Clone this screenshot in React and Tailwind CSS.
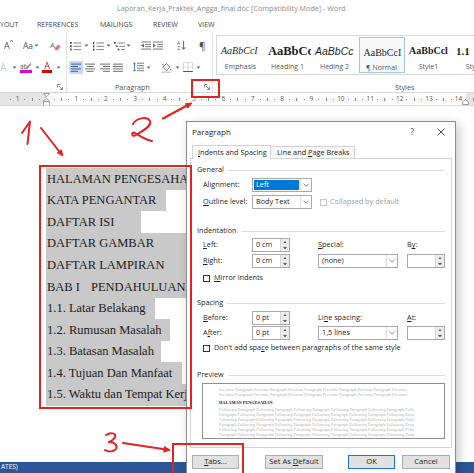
import React from "react";

const SERIF = "font-['Liberation_Serif','Times_New_Roman',serif]";
const RED = "#e32322";

function Caret() {
  return (
    <svg width="5" height="3" viewBox="0 0 5 3" className="shrink-0">
      <path d="M0.5 0.4h4L2.5 2.7z" fill="#6b6b6b" />
    </svg>
  );
}

function Launcher() {
  return (
    <svg width="6" height="6" viewBox="0 0 6 6">
      <path d="M0.5 3.5v-3h3" stroke="#7a7a7a" strokeWidth="0.9" fill="none" />
      <path d="M2 2l3.3 3.3M5.5 3v2.5H3" stroke="#7a7a7a" strokeWidth="0.9" fill="none" />
    </svg>
  );
}

function LinesIcon({ rows, color = "#6e6e6e" }) {
  return (
    <svg width="10" height="9" viewBox="0 0 10 9">
      {rows.map(([x, len], i) => (
        <rect key={i} x={x} y={0.6 + i * 2.4} width={len} height="1" fill={color} />
      ))}
    </svg>
  );
}

function ListIcon({ kind }) {
  return (
    <svg width="11" height="10" viewBox="0 0 11 10">
      {[0, 1, 2].map((i) => {
        const y = 1 + i * 3.3;
        const ind = kind === "multi" ? i * 1.8 : 0;
        return (
          <g key={i}>
            <rect x={ind} y={y} width={kind === "numbers" ? 1.4 : 1.8} height={kind === "numbers" ? 2.2 : 1.8} fill="#555" />
            <rect x={ind + 3.4} y={y + 0.5} width={11 - ind - 3.4} height="1" fill="#858585" />
          </g>
        );
      })}
    </svg>
  );
}

function IndentIcon({ dir }) {
  return (
    <svg width="10" height="9" viewBox="0 0 10 9">
      <rect x="0" y="0.5" width="10" height="1" fill="#7a7a7a" />
      <rect x="4.2" y="2.9" width="5.8" height="1" fill="#7a7a7a" />
      <rect x="4.2" y="5.2" width="5.8" height="1" fill="#7a7a7a" />
      <rect x="0" y="7.6" width="10" height="1" fill="#7a7a7a" />
      {dir === "in" ? (
        <path d="M0 2.4L3 4.5L0 6.6z" fill="#3a6fb6" />
      ) : (
        <path d="M3 2.4L0 4.5L3 6.6z" fill="#3a6fb6" />
      )}
    </svg>
  );
}

function SortIcon() {
  return (
    <svg width="9" height="11" viewBox="0 0 9 11">
      <text x="0" y="4.6" fontSize="5" fontFamily="Open Sans" fill="#555">A</text>
      <text x="0.2" y="10.4" fontSize="5" fontFamily="Open Sans" fill="#555">Z</text>
      <path d="M6.6 0.8v8.4M4.9 7.3l1.7 2 1.7-2" stroke="#555" strokeWidth="0.9" fill="none" />
    </svg>
  );
}

function LineSpacingIcon() {
  return (
    <svg width="11" height="10" viewBox="0 0 11 10">
      <rect x="4" y="0.7" width="7" height="1" fill="#7a7a7a" />
      <rect x="4" y="3.2" width="7" height="1" fill="#7a7a7a" />
      <rect x="4" y="5.7" width="7" height="1" fill="#7a7a7a" />
      <rect x="4" y="8.2" width="7" height="1" fill="#7a7a7a" />
      <path d="M1.5 0.2L0 2.3h3zM1.5 9.8L0 7.7h3z" fill="#3a6fb6" />
      <rect x="1.1" y="2" width="0.8" height="6" fill="#3a6fb6" />
    </svg>
  );
}

function ShadingIcon() {
  return (
    <svg width="11" height="11" viewBox="0 0 11 11">
      <path d="M1.8 5.2L5.4 1.6L9 5.2L5.4 8.8Z" fill="#f3f3f3" stroke="#6a6a6a" strokeWidth="0.9" />
      <path d="M3.2 3.8L1.2 1.8" stroke="#6a6a6a" strokeWidth="0.9" />
      <path d="M9.4 6.4c0.8 1.1 1 1.9 0.3 2.1-0.7 0.2-0.9-0.7-0.3-2.1z" fill="#6a6a6a" />
      <rect x="0.5" y="9.6" width="9" height="1.2" fill="#bdbdbd" />
    </svg>
  );
}

function BordersIcon() {
  return (
    <svg width="10" height="10" viewBox="0 0 10 10">
      <rect x="0.5" y="0.5" width="9" height="9" fill="none" stroke="#a8a8a8" strokeWidth="0.8" strokeDasharray="1 1" />
      <path d="M5 0.5v9M0.5 5h9" stroke="#a8a8a8" strokeWidth="0.8" strokeDasharray="1 1" />
      <path d="M0.3 9.5h9.4" stroke="#555" strokeWidth="1" />
    </svg>
  );
}

function EraserIcon() {
  return (
    <svg width="11" height="11" viewBox="0 0 11 11">
      <text x="0" y="8" fontSize="8" fontFamily="Open Sans" fill="#6a6a6a">A</text>
      <path d="M4.2 9.2L8 4.6L10.6 6.6L7.2 10.6Z" fill="#e46aa3" />
    </svg>
  );
}

function FontGroup() {
  return (
    <div className="w-[67px] shrink-0 flex flex-col border-r border-[#e3e3e3] pt-[7px]">
      <div className="h-[14px] flex items-center">
        <div className="ml-[4px] w-[9px] flex items-start">
          <span className="text-[9px] leading-none text-[#555]">A</span>
          <svg width="3" height="2" viewBox="0 0 3 2" className="mt-[-1px]">
            <path d="M0 2L1.5 0L3 2" stroke="#555" strokeWidth="0.7" fill="none" />
          </svg>
        </div>
        <div className="ml-[10px] w-[17px] flex items-center gap-[1px]">
          <span className="text-[8.5px] leading-none text-[#555]">Aa</span>
          <Caret />
        </div>
        <div className="ml-[10px]">
          <EraserIcon />
        </div>
      </div>
      <div className="mt-[8px] h-[14px] flex items-center">
        <span className="w-[9px] text-[10px] leading-none text-[#c9d2de]">A</span>
        <div className="ml-[3px]"><Caret /></div>
        <div className="ml-[3px] w-[12px] flex flex-col items-center">
          <svg width="12" height="8" viewBox="0 0 12 8">
            <text x="0" y="7" fontSize="6.5" fontFamily="Open Sans" fill="#555">ab</text>
            <path d="M6 6L10.5 1L11.6 2L7.2 7z" fill="#8a8a8a" />
          </svg>
          <div className="w-[12px] h-[2.5px] bg-[#e000d8]" />
        </div>
        <div className="ml-[3px]"><Caret /></div>
        <div className="ml-[2px] w-[10px] flex flex-col items-center">
          <span className="text-[9px] leading-[8px] text-[#a42020]">A</span>
          <div className="w-[10px] h-[2.5px] bg-[#d00000]" />
        </div>
        <div className="ml-[4px]"><Caret /></div>
      </div>
      <div className="mt-[8px] h-[10px] flex items-center justify-end pr-[3px]">
        <Launcher />
      </div>
    </div>
  );
}

function ParagraphGroup() {
  const left = [[0, 10], [0, 7], [0, 10], [0, 7]];
  const center = [[0, 10], [1.5, 7], [0, 10], [1.5, 7]];
  const right = [[0, 10], [3, 7], [0, 10], [3, 7]];
  const justify = [[0, 10], [0, 10], [0, 10], [0, 10]];
  return (
    <div className="w-[146px] shrink-0 flex flex-col border-r border-[#e3e3e3] pt-[7px]">
      <div className="h-[14px] flex items-center">
        <div className="ml-[3px]"><ListIcon kind="bullets" /></div>
        <div className="ml-[3px]"><Caret /></div>
        <div className="ml-[4px]"><ListIcon kind="numbers" /></div>
        <div className="ml-[2px]"><Caret /></div>
        <div className="ml-[3px]"><ListIcon kind="multi" /></div>
        <div className="ml-[1px]"><Caret /></div>
        <div className="ml-[10px]"><IndentIcon dir="out" /></div>
        <div className="ml-[2px]"><IndentIcon dir="in" /></div>
        <div className="ml-[14px]"><SortIcon /></div>
        <div className="ml-[13px] w-[8px] text-[10px] leading-none text-[#555]">¶</div>
      </div>
      <div className="mt-[8px] h-[14px] flex items-center">
        <div className="ml-[2px] w-[14px] h-[13px] bg-[#c7d8ef] flex items-center justify-center">
          <LinesIcon rows={left} color="#3564a6" />
        </div>
        <div className="ml-[2px]"><LinesIcon rows={center} /></div>
        <div className="ml-[5px]"><LinesIcon rows={right} /></div>
        <div className="ml-[3px]"><LinesIcon rows={justify} /></div>
        <div className="ml-[10px]"><LineSpacingIcon /></div>
        <div className="ml-[2px]"><Caret /></div>
        <div className="ml-[10px]"><ShadingIcon /></div>
        <div className="ml-[3px]"><Caret /></div>
        <div className="ml-[3px]"><BordersIcon /></div>
        <div className="ml-[3px]"><Caret /></div>
      </div>
      <div className="mt-[8px] h-[10px] flex items-center">
        <span className="ml-[48px] text-[7.2px] leading-none text-[#555]">Paragraph</span>
        <div className="ml-auto mr-[2px]"><Launcher /></div>
      </div>
    </div>
  );
}

const galleryItems = [
  { prev: "AaBbCcI", cls: "italic text-[10px] " + SERIF, label: "Emphasis" },
  { prev: "AaBbCc", cls: "font-bold text-[12.5px] " + SERIF, label: "Heading 1" },
  { prev: "AaBbCc", cls: "italic text-[10.5px] font-['Liberation_Sans',sans-serif]", label: "Heding 2" },
  { prev: "AaBbCcI", cls: "text-[10px] " + SERIF, label: "¶ Normal", sel: true },
  { prev: "AaBbCcl", cls: "font-bold text-[10px] " + SERIF, label: "Style1" },
  { prev: "1.1", cls: "font-bold text-[11px] " + SERIF, label: "Style2" },
];

function StylesGroup() {
  return (
    <div className="flex-1 min-w-0 flex flex-col pt-[3px] overflow-hidden">
      <div className="ml-[3px] h-[40px] flex border border-r-0 border-[#d8d8d8] pl-[0px]">
        {galleryItems.map((s) => (
          <div
            key={s.label}
            className={
              s.sel
                ? "w-[46px] mx-[0.5px] my-[1px] shrink-0 flex flex-col border border-[#a9c4e6] bg-[#f7fafd] overflow-hidden"
                : "w-[47px] shrink-0 flex flex-col overflow-hidden"
            }
          >
            <div className="mt-[8px] h-[14px] pl-[4px] flex items-center whitespace-nowrap text-[#1e1e1e] leading-none">
              <span className={s.cls}>{s.prev}</span>
            </div>
            <div className="mt-[3px] h-[10px] flex items-center justify-center whitespace-nowrap text-[7px] leading-none text-[#555]">
              {s.label}
            </div>
          </div>
        ))}
      </div>
      <div className="mt-[8px] h-[10px] flex items-center pl-[182px] text-[7.2px] leading-none text-[#555]">
        Styles
      </div>
    </div>
  );
}

function Dot() {
  return <span className="w-[1px] h-[1px] bg-[#8a8a8a]" />;
}
function Tick() {
  return <span className="w-[1px] h-[3px] bg-[#8a8a8a]" />;
}

function Hourglass() {
  return (
    <svg width="7" height="13" viewBox="0 0 7 13" className="shrink-0">
      <path d="M0.5 0.5h6L3.5 4z" fill="#fff" stroke="#8a8a8a" strokeWidth="0.8" />
      <path d="M3.5 5L6.5 8.3h-6z" fill="#fff" stroke="#8a8a8a" strokeWidth="0.8" />
      <rect x="0.5" y="8.8" width="6" height="3.6" fill="#fff" stroke="#8a8a8a" strokeWidth="0.8" />
    </svg>
  );
}

function Ruler() {
  const marks = ["1", null, "1", "2", "3", "4", "5", "6", "7", "8", "9", "10", "11", "12", "13", "14"];
  return (
    <div className="h-[13px] shrink-0 flex items-center border-b border-[#d9d9d9] bg-[linear-gradient(to_right,#e4e4e4_47px,#ffffff_47px,#ffffff_466px,#e4e4e4_466px)] text-[6.5px] leading-none text-[#555] overflow-hidden">
      <div className="w-[13.9px] shrink-0 flex justify-end">
        <span className="w-[7.35px] flex justify-center"><Dot /></span>
      </div>
      {marks.map((m, i) => (
        <div key={i} className="w-[29.4px] shrink-0 flex items-center">
          <span className="w-[7.35px] flex justify-center">{m === null ? <Hourglass /> : m}</span>
          <span className="w-[7.35px] flex justify-center">
            {i === marks.length - 1 ? (
              <svg width="7" height="6" viewBox="0 0 7 6" className="mt-[6px]">
                <path d="M0.5 5.5v-2.5L3.5 0.5L6.5 3v2.5z" fill="#fff" stroke="#8a8a8a" strokeWidth="0.8" />
              </svg>
            ) : (
              <Dot />
            )}
          </span>
          <span className="w-[7.35px] flex justify-center"><Tick /></span>
          <span className="w-[7.35px] flex justify-center"><Dot /></span>
        </div>
      ))}
    </div>
  );
}

const docLines = [
  { t: "HALAMAN PENGESAHAN", w: "w-[200px]" },
  { t: "KATA PENGANTAR", w: "w-[120px]" },
  { t: "DAFTAR ISI", w: "w-[95px]" },
  { t: "DAFTAR GAMBAR", w: "w-[200px]" },
  { t: "DAFTAR LAMPIRAN", w: "w-[200px]" },
  { t: "BAB", w: "w-[200px]", bab: true },
  { t: "1.1. Latar Belakang", w: "w-[109px]" },
  { t: "1.2. Rumusan Masalah", w: "w-[124px]" },
  { t: "1.3. Batasan Masalah", w: "w-[115px]" },
  { t: "1.4. Tujuan Dan Manfaat", w: "w-[136px]" },
  { t: "1.5. Waktu dan Tempat Kerja Praktek", w: "w-[200px]" },
];

function Document() {
  return (
    <div className={"flex-1 pt-[62px] pl-[46px] text-[12.5px] leading-none text-[#1c1c1c] " + SERIF}>
      {docLines.map((l, i) => (
        <div key={i} className={"h-[21.6px] flex items-center bg-[#c9c9c9] whitespace-nowrap overflow-hidden pl-[1px] " + l.w}>
          {l.bab ? (
            <>
              <span className="w-[44px] shrink-0">BAB I</span>
              <span>PENDAHULUAN</span>
            </>
          ) : (
            l.t
          )}
        </div>
      ))}
    </div>
  );
}

function Spin({ value }) {
  return (
    <div className="flex h-[14px] w-[38px] border border-[#a9a9a9] bg-white">
      <div className="flex-1 flex items-center pl-[3px]">{value}</div>
      <div className="w-[9px] flex flex-col bg-[#ededed] border-l border-[#d6d6d6]">
        <div className="flex-1 flex items-center justify-center">
          <svg width="4" height="2.5" viewBox="0 0 4 2.5"><path d="M0 2.5L2 0L4 2.5z" fill="#555" /></svg>
        </div>
        <div className="flex-1 flex items-center justify-center">
          <svg width="4" height="2.5" viewBox="0 0 4 2.5"><path d="M0 0L2 2.5L4 0z" fill="#555" /></svg>
        </div>
      </div>
    </div>
  );
}

function Combo({ children, w, selected }) {
  return (
    <div className={"flex h-[14px] border border-[#a9a9a9] bg-white " + w}>
      <div className="flex-1 flex items-center p-[1px]">
        {selected ? (
          <div className="h-full w-full bg-[#0078d7] text-white flex items-center pl-[2px]">{children}</div>
        ) : (
          <div className="pl-[2px] flex items-center">{children}</div>
        )}
      </div>
      <div className="w-[11px] flex items-center justify-center border-l border-[#e0e0e0]">
        <svg width="6" height="4" viewBox="0 0 6 4">
          <path d="M0.5 0.7L3 3.2L5.5 0.7" stroke="#666" strokeWidth="0.8" fill="none" />
        </svg>
      </div>
    </div>
  );
}

function Check({ disabled }) {
  return (
    <div className={disabled ? "w-[7px] h-[7px] border border-[#c4c4c4] bg-white" : "w-[7px] h-[7px] border border-[#333] bg-white"} />
  );
}

function Section({ label }) {
  return (
    <div className="h-[12px] flex items-center gap-[4px]">
      <span>{label}</span>
      <div className="flex-1 h-px bg-[#dcdcdc]" />
    </div>
  );
}

const prevLine = "Previous Paragraph Previous Paragraph Previous Paragraph Previous Paragraph Previous Paragraph Previous";
const follA = "Following Paragraph Following Paragraph Following Paragraph Following Paragraph Following Paragraph Following";
const follB = "Paragraph Following Paragraph Following Paragraph Following Paragraph Following Paragraph Following Paragraph";

function Dialog() {
  return (
    <div className="absolute left-[186px] top-[121px] w-[270px] h-[360px] bg-white border border-[#8e8e8e] shadow-[3px_3px_10px_rgba(0,0,0,0.22)] flex flex-col text-[7.3px] leading-none text-[#1f1f1f]">
      <div className="h-[20px] flex items-center pl-[5px] pr-[10px]">
        <span className="text-[8px]">Paragraph</span>
        <span className="ml-auto text-[8.5px] text-[#444]">?</span>
        <svg className="ml-[23px]" width="8" height="8" viewBox="0 0 8 8">
          <path d="M0.5 0.5l7 7M7.5 0.5l-7 7" stroke="#333" strokeWidth="0.9" />
        </svg>
      </div>
      <div className="mt-[3px] h-[13px] flex items-end pl-[5px]">
        <div className="relative z-10 -mb-px w-[79px] h-[14px] border border-b-0 border-[#d3d3d3] bg-white flex items-center pl-[5px] whitespace-nowrap">
          <u>I</u>ndents and Spacing
        </div>
        <div className="w-[84px] h-[12px] border-t border-r border-[#d3d3d3] bg-[#f8f8f8] flex items-center pl-[6px] whitespace-nowrap">
          Line and&nbsp;<u>P</u>age Breaks
        </div>
      </div>
      <div className="mx-[3px] h-[290px] border border-[#d3d3d3] bg-white pl-[6px] pr-[6px] pt-[5px] flex flex-col">
        <Section label="General" />
        <div className="mt-[2px] h-[14px] flex items-center pl-[6px]">
          <span className="w-[49px]">Alignment:</span>
          <Combo w="w-[60px]" selected>Left</Combo>
        </div>
        <div className="mt-[3px] h-[14px] flex items-center pl-[6px]">
          <span className="w-[49px]"><u>O</u>utline level:</span>
          <Combo w="w-[60px]">Body Text</Combo>
          <div className="ml-[8px]"><Check disabled /></div>
          <span className="ml-[3px] text-[#a0a0a0]">Collapsed by default</span>
        </div>

        <div className="mt-[16px]"><Section label="Indentation" /></div>
        <div className="mt-[1px] h-[14px] grid grid-cols-[49px_38px_28px_80px_9px_38px] items-center pl-[6px]">
          <span><u>L</u>eft:</span>
          <Spin value="0 cm" />
          <span />
          <span><u>S</u>pecial:</span>
          <span />
          <span>B<u>y</u>:</span>
        </div>
        <div className="mt-[2px] h-[14px] grid grid-cols-[49px_38px_28px_80px_9px_38px] items-center pl-[6px]">
          <span><u>R</u>ight:</span>
          <Spin value="0 cm" />
          <span />
          <Combo w="w-[80px]">(none)</Combo>
          <span />
          <Spin value="" />
        </div>
        <div className="mt-[4px] h-[12px] flex items-center pl-[6px] gap-[4px]">
          <Check />
          <span><u>M</u>irror indents</span>
        </div>

        <div className="mt-[13px]"><Section label="Spacing" /></div>
        <div className="mt-[2px] h-[14px] grid grid-cols-[49px_38px_28px_80px_9px_38px] items-center pl-[6px]">
          <span><u>B</u>efore:</span>
          <Spin value="0 pt" />
          <span />
          <span>Li<u>n</u>e spacing:</span>
          <span />
          <span><u>A</u>t:</span>
        </div>
        <div className="mt-[1px] h-[14px] grid grid-cols-[49px_38px_28px_80px_9px_38px] items-center pl-[6px]">
          <span>A<u>f</u>ter:</span>
          <Spin value="0 pt" />
          <span />
          <Combo w="w-[80px]">1,5 lines</Combo>
          <span />
          <Spin value="" />
        </div>
        <div className="mt-[2px] h-[12px] flex items-center pl-[6px] gap-[4px]">
          <Check />
          <span>Don't add spa<u>c</u>e between paragraphs of the same style</span>
        </div>

        <div className="mt-[15px]"><Section label="Preview" /></div>
        <div className={"mt-[2px] ml-[5px] w-[243px] h-[56px] border border-[#8f8f8f] bg-white pl-[16px] pr-[30px] pt-[3px] overflow-hidden text-[4.3px] leading-[5px] " + SERIF}>
          <div className="whitespace-nowrap overflow-hidden text-[#b5b5b5]">{prevLine}</div>
          <div className="whitespace-nowrap overflow-hidden text-[#b5b5b5]">{prevLine}</div>
          <div className="mt-[3px] whitespace-nowrap font-bold text-[#222]">HALAMAN PENGESAHAN</div>
          <div className="mt-[2px] text-[#b5b5b5]">
            {[follA, follB, follA, follB, follA, follB].map((l, i) => (
              <div key={i} className="whitespace-nowrap overflow-hidden">{l}</div>
            ))}
          </div>
        </div>
      </div>
      <div className="mt-[7px] h-[14px] flex pl-[5px] text-[7.6px]">
        <div className="w-[47px] border border-[#adadad] bg-[#e1e1e1] flex items-center justify-center">
          <span><u>T</u>abs...</span>
        </div>
        <div className="ml-[26px] w-[58px] border border-[#adadad] bg-[#e1e1e1] flex items-center justify-center">
          <span>Set As <u>D</u>efault</span>
        </div>
        <div className="ml-[25px] w-[47px] border border-[#1f74d3] bg-[#e1e1e1] flex items-center justify-center">
          OK
        </div>
        <div className="ml-[7px] w-[48px] border border-[#adadad] bg-[#e1e1e1] flex items-center justify-center">
          Cancel
        </div>
      </div>
    </div>
  );
}

function Annotations() {
  return (
    <>
      <div className="absolute left-[39px] top-[165px] w-[153px] h-[244px] border-2 border-[#e32322]" />
      <div className="absolute left-[191px] top-[79px] w-[29px] h-[19px] border-2 border-[#e32322]" />
      <div className="absolute left-[172px] top-[443px] w-[72px] h-[40px] border-2 border-[#e32322]" />
      <svg className="absolute left-0 top-0" width="474" height="473" viewBox="0 0 474 473" fill="none">
        <g stroke={RED} strokeWidth="2" strokeLinecap="round" strokeLinejoin="round">
          <path d="M22 133L30 121.5L27.5 144" />
          <path d="M41 128L60 152.5" />
          <path d="M133 124C136 118 147 116 150 121C152 126 143 131 136 135C131 138 131 131 135 133C140 136 146 140 152 141" />
          <path d="M163 118.5L187 105.5" />
          <path d="M106 435C110 432 117 433 115 437C114 440 111 441 109 442C114 442 118 445 116 449C114 452 108 452 105 450" />
          <path d="M123 443L164.5 449.2" />
        </g>
        <path d="M63 156L57.3 152.8L61.3 149.8Z" fill={RED} stroke={RED} strokeWidth="1" />
        <path d="M192 103L187.9 108.1L185.5 103.7Z" fill={RED} stroke={RED} strokeWidth="1" />
        <path d="M170 450L163.7 452.2L164.5 446.6Z" fill={RED} stroke={RED} strokeWidth="1" />
      </svg>
    </>
  );
}

export default function App() {
  return (
    <div className="relative w-[474px] h-[473px] overflow-hidden bg-white flex flex-col font-['Open_Sans','Noto_Sans',sans-serif] text-[#333]">
      <div className="h-[17px] shrink-0 flex items-center pl-[117px] whitespace-nowrap text-[7.2px] leading-none text-[#8c8c8c]">
        Laporan_Kerja_Praktek_Angga_final.doc [Compatibility Mode] - Word
      </div>
      <div className="h-[15px] shrink-0 flex items-center text-[7px] leading-none text-[#444] whitespace-nowrap">
        <span className="w-[37px]">YOUT</span>
        <span className="w-[63px]">REFERENCES</span>
        <span className="w-[53px]">MAILINGS</span>
        <span className="w-[45px]">REVIEW</span>
        <span>VIEW</span>
      </div>
      <div className="h-[61px] shrink-0 flex border-b border-[#d6d6d6]">
        <FontGroup />
        <ParagraphGroup />
        <StylesGroup />
      </div>
      <Ruler />
      <Document />
      <div className="h-[11px] shrink-0 bg-[#2b579a] flex items-center pl-[1px] text-[6.5px] leading-none text-white">
        ATES)
      </div>
      <Dialog />
      <Annotations />
    </div>
  );
}
